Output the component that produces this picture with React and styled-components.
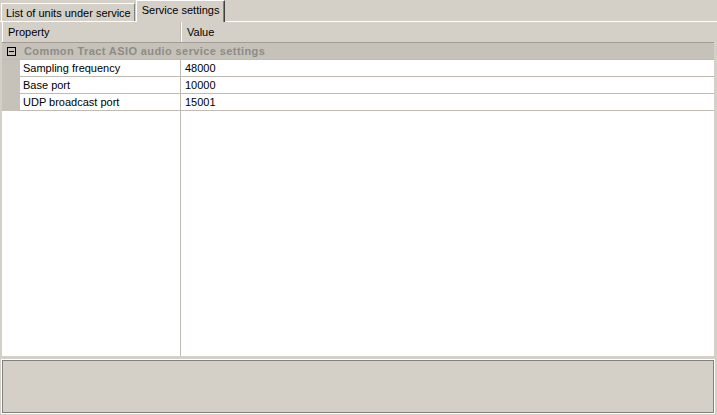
import styled, { createGlobalStyle } from "styled-components"

const GlobalStyle = createGlobalStyle`
  html, body {
    margin: 0;
    padding: 0;
    background: #d4d0c8;
  }
  body {
    font-family: Tahoma, "Liberation Sans", Arial, sans-serif;
    font-size: 11px;
    color: #000;
  }
`

const face = "#d4d0c8"
const shadow = "#808080"
const lineGrey = "#c0bcb4"

const rows = [
  { name: "Sampling frequency", value: "48000" },
  { name: "Base port", value: "10000" },
  { name: "UDP broadcast port", value: "15001" },
]

const App = () => {
  return (
    <Window>
      <GlobalStyle />
      <TabStrip>
        <Tab>List of units under service</Tab>
        <Tab active>Service settings</Tab>
      </TabStrip>
      <Panel>
        <Grid>
          <HeaderRow>
            <HeaderCell>Property</HeaderCell>
            <HeaderCell last>Value</HeaderCell>
          </HeaderRow>
          <CategoryRow>
            <ToggleBox>
              <svg width="9" height="9" viewBox="0 0 9 9">
                <rect x="0.5" y="0.5" width="8" height="8" fill="none" stroke="#000" />
                <line x1="2" y1="4.5" x2="7" y2="4.5" stroke="#000" />
              </svg>
            </ToggleBox>
            <CategoryLabel>Common Tract ASIO audio service settings</CategoryLabel>
          </CategoryRow>
          {rows.map((r) => (
            <PropRow key={r.name}>
              <Margin />
              <NameCell>{r.name}</NameCell>
              <ValueCell>{r.value}</ValueCell>
            </PropRow>
          ))}
          <Filler>
            <FillerName />
            <div />
          </Filler>
        </Grid>
        <Description />
      </Panel>
    </Window>
  )
}

export default App

const Window = styled.div`
  width: 717px;
  height: 415px;
  background: ${face};
  display: flex;
  flex-direction: column;
  overflow: hidden;
`

const TabStrip = styled.div`
  height: 21px;
  display: flex;
  align-items: flex-end;
  padding-left: 1px;
`

const Tab = styled.div`
  box-sizing: border-box;
  height: ${(p) => (p.active ? "22px" : "18px")};
  padding: ${(p) => (p.active ? "2px 5px 0 5px" : "2px 3px 0 4px")};
  margin-left: ${(p) => (p.active ? "1px" : "0")};
  margin-bottom: ${(p) => (p.active ? "-1px" : "0")};
  border-left: 1px solid #fff;
  border-top: 1px solid #fff;
  border-right: 1px solid ${(p) => (p.active ? "#404040" : shadow)};
  box-shadow: ${(p) => (p.active ? `inset -1px 0 0 ${shadow}` : "none")};
  background: ${face};
  line-height: 14px;
  white-space: nowrap;
  position: relative;
  z-index: ${(p) => (p.active ? 1 : 0)};
`

const Panel = styled.div`
  flex: 1;
  border-top: 1px solid #fff;
  display: flex;
  flex-direction: column;
  padding: 0 3px 2px 2px;
  min-height: 0;
`

const Grid = styled.div`
  flex: 1;
  display: flex;
  flex-direction: column;
  background: #fff;
  min-height: 0;
`

const HeaderRow = styled.div`
  display: grid;
  grid-template-columns: 179px 1fr;
  background: ${face};
  border-bottom: 1px solid #a09c94;
  box-sizing: border-box;
  height: 21px;
`

const HeaderCell = styled.div`
  padding-left: 5px;
  line-height: 20px;
  border-left: 1px solid #fff;
  border-right: ${(p) => (p.last ? "none" : `1px solid ${lineGrey}`)};
`

const CategoryRow = styled.div`
  height: 17px;
  display: flex;
  align-items: center;
  background: #c6c2ba;
  border-bottom: 1px solid ${lineGrey};
  box-sizing: border-box;
`

const ToggleBox = styled.div`
  width: 18px;
  display: flex;
  justify-content: center;
  align-items: center;
  height: 100%;
  svg {
    display: block;
  }
`

const CategoryLabel = styled.div`
  padding-left: 4px;
  font-weight: bold;
  letter-spacing: 0.4px;
  color: #8e8b86;
  white-space: nowrap;
`

const PropRow = styled.div`
  height: 17px;
  display: grid;
  grid-template-columns: 18px 161px 1fr;
  box-sizing: border-box;
`

const Margin = styled.div`
  background: #c6c2ba;
`

const NameCell = styled.div`
  padding-left: 3px;
  line-height: 16px;
  border-bottom: 1px solid ${lineGrey};
  border-right: 1px solid ${lineGrey};
  white-space: nowrap;
`

const ValueCell = styled.div`
  padding-left: 4px;
  line-height: 16px;
  border-bottom: 1px solid ${lineGrey};
`

const Filler = styled.div`
  flex: 1;
  display: grid;
  grid-template-columns: 179px 1fr;
`

const FillerName = styled.div`
  border-right: 1px solid ${lineGrey};
`

const Description = styled.div`
  height: 53px;
  margin-top: 4px;
  border: 1px solid ${shadow};
  outline: 1px solid #fff;
  background: ${face};
  box-sizing: border-box;
`
